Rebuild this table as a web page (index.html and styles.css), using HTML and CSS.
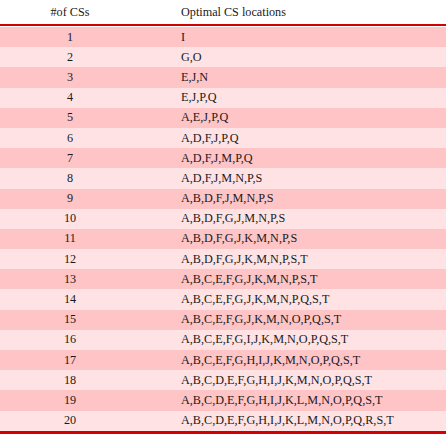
FILE: index.html
```html
<!DOCTYPE html>
<html>
<head>
<meta charset="utf-8">
<link rel="stylesheet" href="styles.css">
</head>
<body>
<table class="cs-table">
  <thead>
    <tr><th class="num">#of CSs</th><th class="loc">Optimal CS locations</th></tr>
  </thead>
  <tbody>
    <tr><td class="num">1</td><td class="loc">I</td></tr>
    <tr><td class="num">2</td><td class="loc">G,O</td></tr>
    <tr><td class="num">3</td><td class="loc">E,J,N</td></tr>
    <tr><td class="num">4</td><td class="loc">E,J,P,Q</td></tr>
    <tr><td class="num">5</td><td class="loc">A,E,J,P,Q</td></tr>
    <tr><td class="num">6</td><td class="loc">A,D,F,J,P,Q</td></tr>
    <tr><td class="num">7</td><td class="loc">A,D,F,J,M,P,Q</td></tr>
    <tr><td class="num">8</td><td class="loc">A,D,F,J,M,N,P,S</td></tr>
    <tr><td class="num">9</td><td class="loc">A,B,D,F,J,M,N,P,S</td></tr>
    <tr><td class="num">10</td><td class="loc">A,B,D,F,G,J,M,N,P,S</td></tr>
    <tr><td class="num">11</td><td class="loc">A,B,D,F,G,J,K,M,N,P,S</td></tr>
    <tr><td class="num">12</td><td class="loc">A,B,D,F,G,J,K,M,N,P,S,T</td></tr>
    <tr><td class="num">13</td><td class="loc">A,B,C,E,F,G,J,K,M,N,P,S,T</td></tr>
    <tr><td class="num">14</td><td class="loc">A,B,C,E,F,G,J,K,M,N,P,Q,S,T</td></tr>
    <tr><td class="num">15</td><td class="loc">A,B,C,E,F,G,J,K,M,N,O,P,Q,S,T</td></tr>
    <tr><td class="num">16</td><td class="loc">A,B,C,E,F,G,I,J,K,M,N,O,P,Q,S,T</td></tr>
    <tr><td class="num">17</td><td class="loc">A,B,C,E,F,G,H,I,J,K,M,N,O,P,Q,S,T</td></tr>
    <tr><td class="num">18</td><td class="loc">A,B,C,D,E,F,G,H,I,J,K,M,N,O,P,Q,S,T</td></tr>
    <tr><td class="num">19</td><td class="loc">A,B,C,D,E,F,G,H,I,J,K,L,M,N,O,P,Q,S,T</td></tr>
    <tr><td class="num">20</td><td class="loc">A,B,C,D,E,F,G,H,I,J,K,L,M,N,O,P,Q,R,S,T</td></tr>
  </tbody>
</table>
</body>
</html>
```
FILE: styles.css
```css
html, body {
  margin: 0;
  padding: 0;
  background: #ffffff;
}
.cs-table {
  width: 446px;
  border-collapse: separate;
  border-spacing: 0;
  font-family: "Liberation Serif", "Times New Roman", serif;
  font-size: 12.2px;
  color: #1a1a1a;
}
.cs-table th {
  font-weight: normal;
  height: 24px;
  padding: 0;
  border-bottom: 2px solid #d40000;
  vertical-align: middle;
}
.cs-table tbody tr:first-child td {
  border-top: 1px solid #ffffff;
}
.cs-table td {
  height: 20.2px;
  padding: 0;
  vertical-align: middle;
}
.cs-table tbody tr:nth-child(odd) td { background: #ffc4c6; }
.cs-table tbody tr:nth-child(even) td { background: #ffe3e4; }
.cs-table tbody tr:last-child td {
  border-bottom: 3px solid #d40000;
}
.num {
  width: 140px;
  text-align: center;
}
.loc {
  text-align: left;
  padding-left: 41px !important;
}
```
